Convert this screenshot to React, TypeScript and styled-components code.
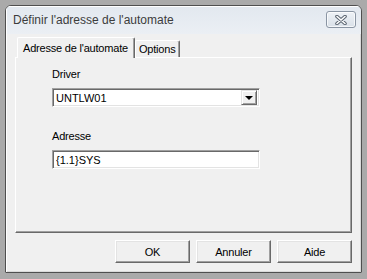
import React, { useState } from 'react'
import styled, { createGlobalStyle } from 'styled-components'

const GlobalStyle = createGlobalStyle`
  html, body {
    margin: 0;
    padding: 0;
    background: #aaaaaa;
  }
  body {
    font-family: "Liberation Sans", Arial, sans-serif;
    font-size: 11px;
    color: #000;
  }
`

const Page = styled.div`
  width: 367px;
  height: 279px;
  padding: 5px 0 0 5px;
  box-sizing: border-box;
`

const Window = styled.div`
  width: 357px;
  height: 268px;
  box-sizing: border-box;
  border: 1px solid #4f4f4f;
  border-radius: 6px 6px 1px 1px;
  background: #f0f0f0;
  box-shadow: inset 1px 1px 0 #ffffff, inset -1px -1px 0 #dadada;
  display: flex;
  flex-direction: column;
  overflow: hidden;
`

const TitleBar = styled.div`
  height: 28px;
  flex: none;
  display: flex;
  align-items: center;
  justify-content: space-between;
  padding: 0 5px 0 7px;
  background: linear-gradient(#e2e8ef, #ebeff4);
  box-shadow: inset 1px 1px 0 #ffffff;
`

const Title = styled.span`
  font-size: 12px;
  color: #3c3c3c;
  margin-top: -1px;
`

const CloseButton = styled.button`
  width: 30px;
  height: 17px;
  margin-top: -1px;
  padding: 0;
  border: 1px solid #8a95a3;
  border-radius: 3px;
  background: linear-gradient(#eef2f6, #d9e0e8);
  box-shadow: inset 0 0 0 1px rgba(255, 255, 255, 0.7);
  display: flex;
  align-items: center;
  justify-content: center;
`

const Body = styled.div`
  flex: 1;
  display: flex;
  flex-direction: column;
  padding: 3px 9px 0 9px;
`

const TabRow = styled.div`
  display: flex;
  align-items: flex-end;
  height: 20px;
  padding-left: 2px;
`

const Tab = styled.div<{ active?: boolean }>`
  box-sizing: border-box;
  height: ${({ active }) => (active ? '21px' : '17px')};
  padding: ${({ active }) => (active ? '4px 6px 0 5px' : '2px 4px 0 3px')};
  margin-bottom: ${({ active }) => (active ? '-1px' : '0')};
  background: #f0f0f0;
  border-top: 1px solid #ffffff;
  border-left: 1px solid #ffffff;
  border-right: 1px solid #696969;
  box-shadow: inset -1px 0 0 #a0a0a0;
  border-radius: 2px 2px 0 0;
  letter-spacing: -0.2px;
  position: relative;
  z-index: ${({ active }) => (active ? 1 : 0)};
`

const Panel = styled.div`
  height: 176px;
  box-sizing: border-box;
  border-top: 1px solid #ffffff;
  border-left: 1px solid #ffffff;
  border-right: 1px solid #696969;
  border-bottom: 1px solid #696969;
  box-shadow: inset -1px -1px 0 #a0a0a0;
  padding: 10px 0 0 36px;
  display: flex;
  flex-direction: column;
`

const Label = styled.div<{ top?: number }>`
  height: 13px;
  line-height: 13px;
  margin-top: ${({ top }) => top ?? 0}px;
  margin-bottom: 7px;
  letter-spacing: -0.2px;
`

const Sunken = styled.div`
  width: 208px;
  height: 19px;
  box-sizing: border-box;
  border-top: 1px solid #a0a0a0;
  border-left: 1px solid #a0a0a0;
  border-right: 1px solid #ffffff;
  border-bottom: 1px solid #ffffff;
  box-shadow: inset 1px 1px 0 #696969, inset -1px -1px 0 #e3e3e3;
  background: #ffffff;
  display: flex;
  align-items: center;
`

const FieldText = styled.span`
  padding-left: 3px;
  flex: 1;
  font-size: 11px;
`

const TextInput = styled.input`
  flex: 1;
  border: none;
  outline: none;
  background: transparent;
  font-family: "Liberation Sans", Arial, sans-serif;
  font-size: 11px;
  padding: 0 0 0 2px;
  margin-left: 1px;
  height: 15px;
`

const DropButton = styled.div`
  width: 16px;
  height: 15px;
  margin-right: 2px;
  box-sizing: border-box;
  background: #f0f0f0;
  border-top: 1px solid #e3e3e3;
  border-left: 1px solid #e3e3e3;
  border-right: 1px solid #696969;
  border-bottom: 1px solid #696969;
  box-shadow: inset 1px 1px 0 #ffffff, inset -1px -1px 0 #a0a0a0;
  display: flex;
  align-items: center;
  justify-content: center;
`

const Arrow = styled.div`
  width: 0;
  height: 0;
  border-left: 4px solid transparent;
  border-right: 4px solid transparent;
  border-top: 4px solid #000;
  margin-top: 1px;
`

const ButtonRow = styled.div`
  display: flex;
  justify-content: flex-end;
  gap: 6px;
  margin-top: 7px;
`

const Button = styled.button`
  width: 75px;
  height: 23px;
  box-sizing: border-box;
  padding: 0;
  background: #f0f0f0;
  border-top: 1px solid #ffffff;
  border-left: 1px solid #ffffff;
  border-right: 1px solid #696969;
  border-bottom: 1px solid #696969;
  box-shadow: inset -1px -1px 0 #a0a0a0, inset 1px 1px 0 #e3e3e3;
  font-family: "Liberation Sans", Arial, sans-serif;
  font-size: 11px;
  letter-spacing: -0.2px;
  color: #000;
`

function CloseGlyph() {
  return (
    <svg width="12" height="10" viewBox="0 0 12 10">
      <path d="M2 1.5 L10 8.5 M10 1.5 L2 8.5" stroke="#5b6571" strokeWidth="3.6" strokeLinecap="round" />
      <path d="M2 1.5 L10 8.5 M10 1.5 L2 8.5" stroke="#ffffff" strokeWidth="1.6" strokeLinecap="round" />
    </svg>
  )
}

export default function App() {
  const [address, setAddress] = useState('{1.1}SYS')

  return (
    <Page>
      <GlobalStyle />
      <Window>
        <TitleBar>
          <Title>Définir l'adresse de l'automate</Title>
          <CloseButton>
            <CloseGlyph />
          </CloseButton>
        </TitleBar>
        <Body>
          <TabRow>
            <Tab active>Adresse de l'automate</Tab>
            <Tab>Options</Tab>
          </TabRow>
          <Panel>
            <Label>Driver</Label>
            <Sunken>
              <FieldText>UNTLW01</FieldText>
              <DropButton>
                <Arrow />
              </DropButton>
            </Sunken>
            <Label top={23}>Adresse</Label>
            <Sunken>
              <TextInput value={address} onChange={e => setAddress(e.target.value)} />
            </Sunken>
          </Panel>
          <ButtonRow>
            <Button>OK</Button>
            <Button>Annuler</Button>
            <Button>Aide</Button>
          </ButtonRow>
        </Body>
      </Window>
    </Page>
  )
}
